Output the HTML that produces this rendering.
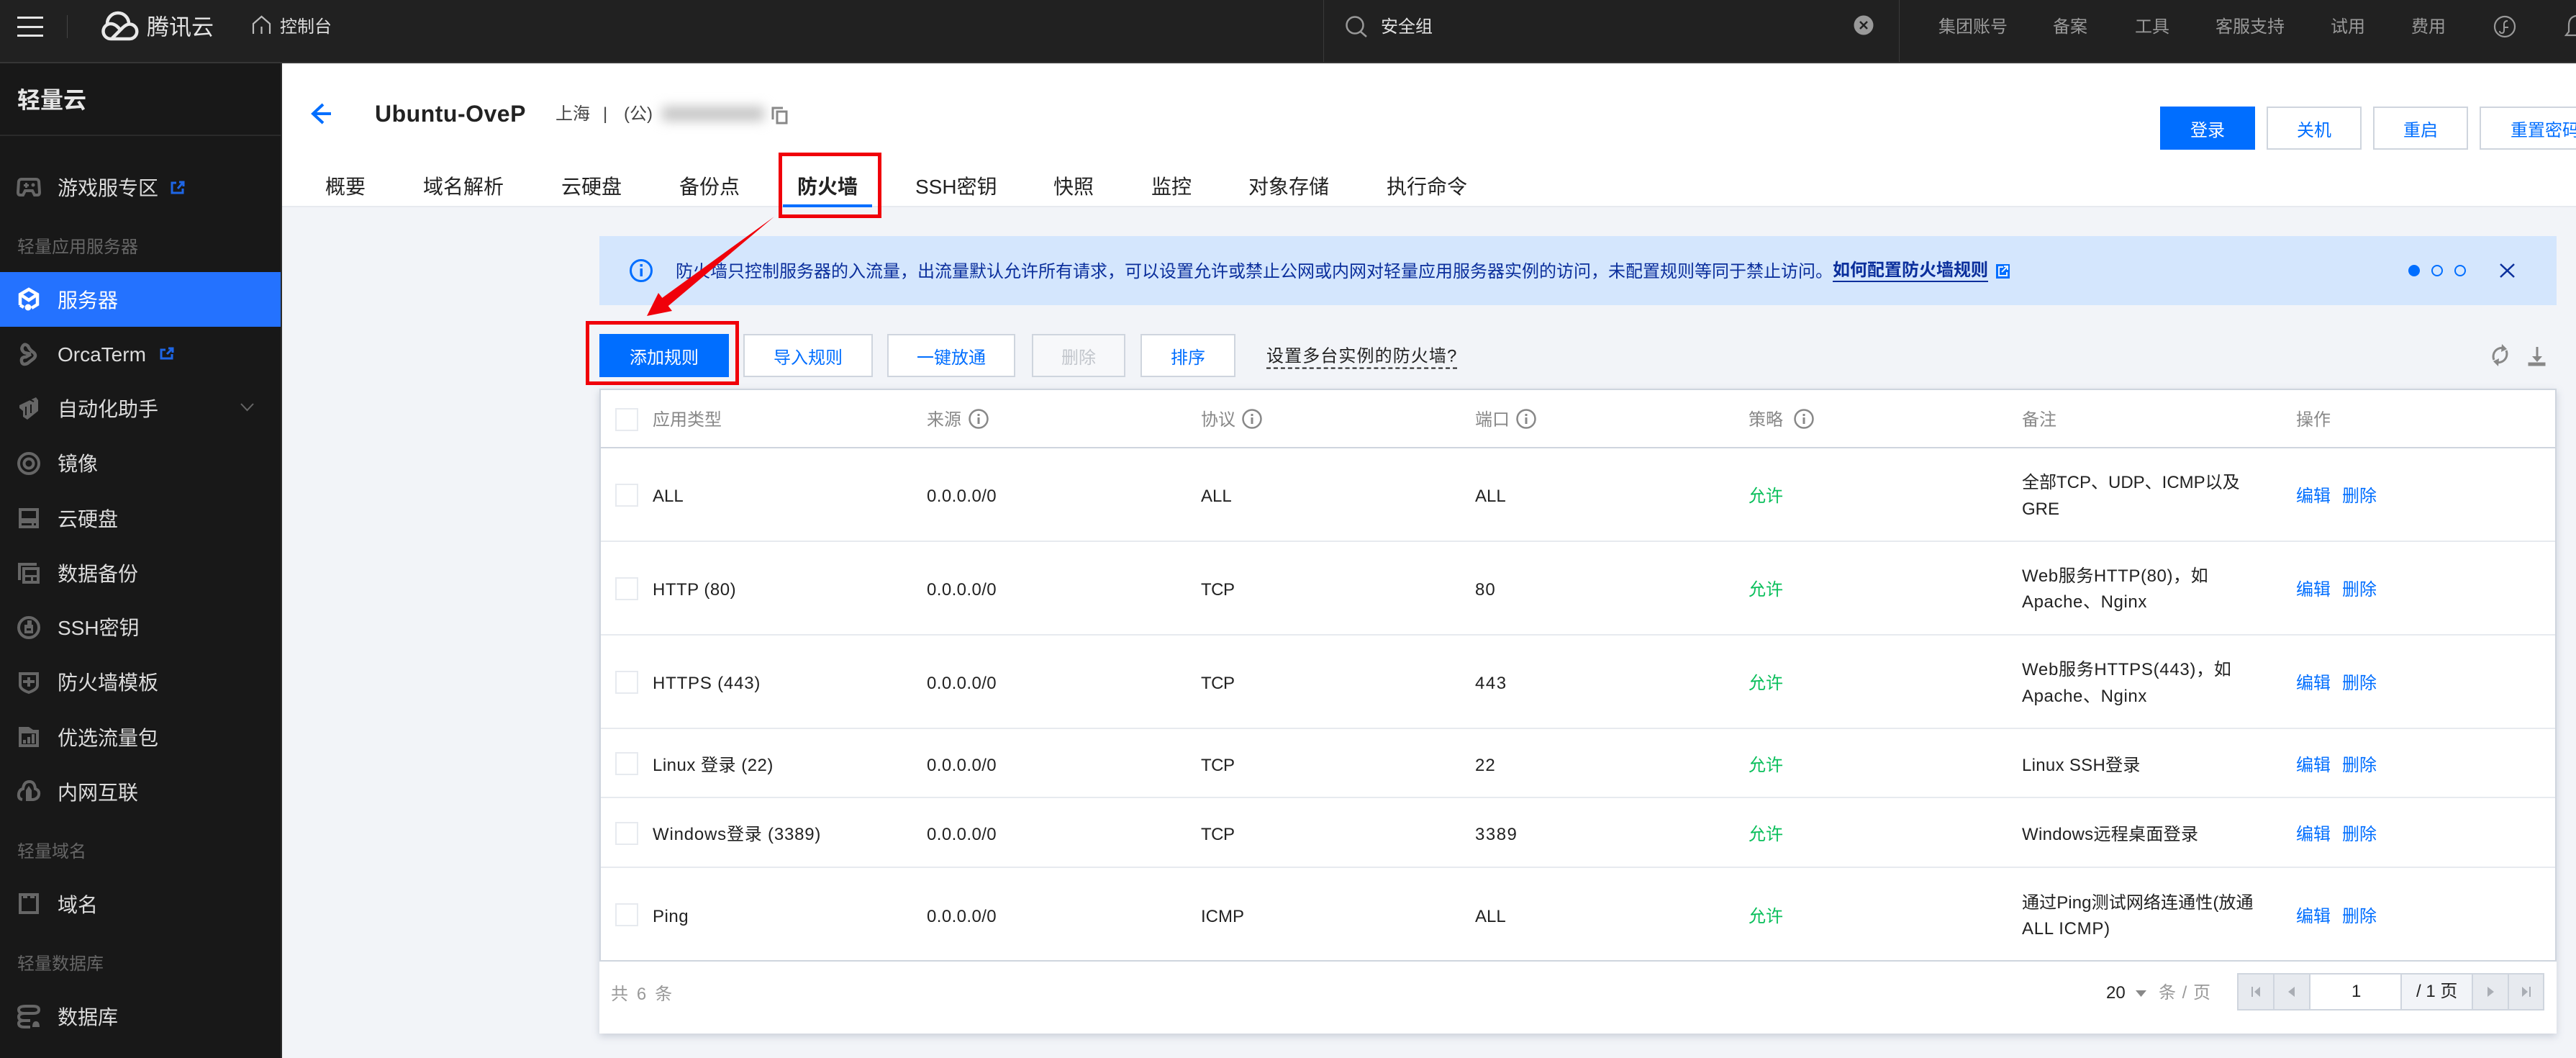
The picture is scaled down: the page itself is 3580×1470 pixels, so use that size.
<!DOCTYPE html>
<html lang="zh-CN"><head><meta charset="utf-8"><title>轻量云 防火墙</title>
<style>
*{box-sizing:border-box}
html,body{margin:0;padding:0;width:3580px;height:1470px;overflow:hidden;background:#f2f4f8;font-family:"Liberation Sans","Noto Sans CJK SC",sans-serif;color:#222}
.a{position:absolute}
.t{position:absolute;white-space:nowrap;line-height:1;transform:translateY(calc(-50% + 2px));font-size:24px}
.s{font-size:28px;left:80px;color:#dcdcdc}
.g{font-size:24px;left:24px;color:#666}
.n{font-size:24px;color:#999}
.tab{font-size:28px;top:258px;color:#222}
.h{color:#888}
.b{position:absolute;height:60px;border:2px solid #cfd5de;background:#fff;color:#006eff;font-size:24px;display:flex;align-items:center;justify-content:center;white-space:nowrap}
.p{background:#006eff;border-color:#006eff;color:#fff}
.l{position:absolute;left:835px;width:2716px;height:2px;background:#e7eaef}
.cb{position:absolute;left:855px;width:32px;height:32px;border:2px solid #e7eaef;background:#fff}
.c{color:#006eff}
.ok{color:#0abf5b;left:2430px}
.ip{letter-spacing:.4px}
.tcp{letter-spacing:-.5px}
</style></head><body>
<div class="a" style="left:0;top:0;width:3580px;height:86px;background:#212121"></div>
<div class="a" style="left:0;top:86px;width:3580px;height:2px;background:#353535"></div>
<div class="a" style="left:0;top:88px;width:390px;height:1382px;background:#181818"></div>
<div class="a" style="left:390px;top:88px;width:2px;height:1382px;background:#2c2c2c"></div>
<div class="a" style="left:0;top:187px;width:390px;height:2px;background:#2a2a2a"></div>
<div class="a" style="left:0;top:378px;width:390px;height:76px;background:#2472ff"></div>
<div class="a" style="left:392px;top:88px;width:3188px;height:198px;background:#fff"></div>
<div class="a" style="left:392px;top:286px;width:3188px;height:2px;background:#e7eaef"></div>
<div class="a" style="left:93px;top:21px;width:1px;height:32px;background:#444"></div>
<div class="a" style="left:1839px;top:0;width:1px;height:86px;background:#3a3a3a"></div>
<div class="a" style="left:2639px;top:0;width:1px;height:86px;background:#3a3a3a"></div>

<span class="t" style="left:204px;top:36px;font-size:31px;color:#e6e6e6">腾讯云</span>
<span class="t" style="left:389px;top:36px;color:#ddd">控制台</span>
<span class="t" style="left:1919px;top:36px;color:#e0e0e0">安全组</span>
<span class="t n" style="left:2694px;top:36px">集团账号</span>
<span class="t n" style="left:2853px;top:36px">备案</span>
<span class="t n" style="left:2967px;top:36px">工具</span>
<span class="t n" style="left:3079px;top:36px">客服支持</span>
<span class="t n" style="left:3239px;top:36px">试用</span>
<span class="t n" style="left:3351px;top:36px">费用</span>

<span class="t" style="left:24px;top:137px;font-size:32px;font-weight:700;color:#e6e6e6">轻量云</span>
<span class="t s" style="top:260px">游戏服专区</span>
<span class="t g" style="top:342px">轻量应用服务器</span>
<span class="t s" style="top:416px;color:#fff">服务器</span>
<span class="t s" style="top:491px">OrcaTerm</span>
<span class="t s" style="top:567px">自动化助手</span>
<span class="t s" style="top:643px">镜像</span>
<span class="t s" style="top:720px">云硬盘</span>
<span class="t s" style="top:796px">数据备份</span>
<span class="t s" style="top:871px">SSH密钥</span>
<span class="t s" style="top:947px">防火墙模板</span>
<span class="t s" style="top:1024px">优选流量包</span>
<span class="t s" style="top:1100px">内网互联</span>
<span class="t g" style="top:1182px">轻量域名</span>
<span class="t s" style="top:1256px">域名</span>
<span class="t g" style="top:1338px">轻量数据库</span>
<span class="t s" style="top:1412px">数据库</span>

<span class="t" style="left:521px;top:156px;font-size:32px;font-weight:700;letter-spacing:.5px;color:#222">Ubuntu-OveP</span>
<span class="t" style="left:772px;top:157px;color:#444">上海</span>
<span class="t" style="left:838px;top:157px;color:#444">|</span>
<span class="t" style="left:867px;top:157px;color:#444">(公)</span>
<div class="a" style="left:920px;top:148px;width:142px;height:20px;background:#c4c4c4;filter:blur(8px)"></div>

<div class="b p" style="left:3002px;top:148px;width:132px">登录</div>
<div class="b" style="left:3150px;top:148px;width:132px">关机</div>
<div class="b" style="left:3298px;top:148px;width:132px">重启</div>
<div class="b" style="left:3446px;top:148px;width:182px;justify-content:flex-start;padding-left:41px">重置密码</div>

<span class="t tab" style="left:452px">概要</span>
<span class="t tab" style="left:588px">域名解析</span>
<span class="t tab" style="left:780px">云硬盘</span>
<span class="t tab" style="left:944px">备份点</span>
<span class="t tab" style="left:1108px;font-weight:700">防火墙</span>
<span class="t tab" style="left:1272px">SSH密钥</span>
<span class="t tab" style="left:1464px">快照</span>
<span class="t tab" style="left:1600px">监控</span>
<span class="t tab" style="left:1735px">对象存储</span>
<span class="t tab" style="left:1927px">执行命令</span>
<div class="a" style="left:1088px;top:284px;width:124px;height:4px;background:#006eff"></div>

<div class="a" style="left:833px;top:328px;width:2720px;height:96px;background:#d4e6fd"></div>
<span class="t" style="left:939px;top:376px;color:#0b2f9c">防火墙只控制服务器的入流量，出流量默认允许所有请求，可以设置允许或禁止公网或内网对轻量应用服务器实例的访问，未配置规则等同于禁止访问。</span>
<span class="t" style="left:2547px;top:376px;color:#0b2f9c;font-weight:700;border-bottom:2px solid #0b2f9c;padding-bottom:2px">如何配置防火墙规则</span>

<div class="b p" style="left:833px;top:464px;width:180px">添加规则</div>
<div class="b" style="left:1033px;top:464px;width:180px">导入规则</div>
<div class="b" style="left:1233px;top:464px;width:178px">一键放通</div>
<div class="b" style="left:1434px;top:464px;width:130px;color:#c2c6cc;background:#f7f8fa">删除</div>
<div class="b" style="left:1585px;top:464px;width:132px">排序</div>
<span class="t" style="left:1760px;top:496px;color:#222;border-bottom:2px dashed #222;padding-bottom:3px;letter-spacing:1.1px">设置多台实例的防火墙?</span>

<div class="a" style="left:833px;top:540px;width:2720px;height:896px;background:#fff;border-top:2px solid #cfd5de;border-left:2px solid #cfd5de;border-right:2px solid #cfd5de;box-shadow:0 4px 10px rgba(130,140,160,.35)"></div>
<div class="a" style="left:833px;top:1336px;width:2720px;height:100px;background:#fff"></div>
<div class="l" style="top:621px;background:#cfd5de"></div>
<div class="l" style="top:751px"></div>
<div class="l" style="top:881px"></div>
<div class="l" style="top:1011px"></div>
<div class="l" style="top:1107px"></div>
<div class="l" style="top:1204px"></div>
<div class="l" style="top:1334px;background:#cfd5de"></div>

<div class="cb" style="top:567px"></div>
<div class="cb" style="top:672px"></div>
<div class="cb" style="top:802px"></div>
<div class="cb" style="top:932px"></div>
<div class="cb" style="top:1045px"></div>
<div class="cb" style="top:1142px"></div>
<div class="cb" style="top:1255px"></div>

<span class="t h" style="left:907px;top:582px">应用类型</span>
<span class="t h" style="left:1288px;top:582px">来源</span>
<span class="t h" style="left:1669px;top:582px">协议</span>
<span class="t h" style="left:2050px;top:582px">端口</span>
<span class="t h" style="left:2430px;top:582px">策略</span>
<span class="t h" style="left:2810px;top:582px">备注</span>
<span class="t h" style="left:3191px;top:582px">操作</span>

<!-- row 1 -->
<span class="t" style="left:907px;top:688px">ALL</span>
<span class="t ip" style="left:1288px;top:688px">0.0.0.0/0</span>
<span class="t" style="left:1669px;top:688px">ALL</span>
<span class="t" style="left:2050px;top:688px">ALL</span>
<span class="t ok" style="top:688px">允许</span>
<span class="t" style="left:2810px;top:669px">全部TCP、UDP、ICMP以及</span>
<span class="t" style="left:2810px;top:706px">GRE</span>
<span class="t c" style="left:3191px;top:688px">编辑</span><span class="t c" style="left:3255px;top:688px">删除</span>
<!-- row 2 -->
<span class="t" style="left:907px;top:818px;letter-spacing:.5px">HTTP (80)</span>
<span class="t ip" style="left:1288px;top:818px">0.0.0.0/0</span>
<span class="t tcp" style="left:1669px;top:818px">TCP</span>
<span class="t" style="left:2050px;top:818px;letter-spacing:1px">80</span>
<span class="t ok" style="top:818px">允许</span>
<span class="t" style="left:2810px;top:799px;letter-spacing:.6px">Web服务HTTP(80)，如</span>
<span class="t" style="left:2810px;top:835px;letter-spacing:.6px">Apache、Nginx</span>
<span class="t c" style="left:3191px;top:818px">编辑</span><span class="t c" style="left:3255px;top:818px">删除</span>
<!-- row 3 -->
<span class="t" style="left:907px;top:948px;letter-spacing:.8px">HTTPS (443)</span>
<span class="t ip" style="left:1288px;top:948px">0.0.0.0/0</span>
<span class="t tcp" style="left:1669px;top:948px">TCP</span>
<span class="t" style="left:2050px;top:948px;letter-spacing:1.5px">443</span>
<span class="t ok" style="top:948px">允许</span>
<span class="t" style="left:2810px;top:929px;letter-spacing:.7px">Web服务HTTPS(443)，如</span>
<span class="t" style="left:2810px;top:966px;letter-spacing:.6px">Apache、Nginx</span>
<span class="t c" style="left:3191px;top:948px">编辑</span><span class="t c" style="left:3255px;top:948px">删除</span>
<!-- row 4 -->
<span class="t" style="left:907px;top:1062px;letter-spacing:.5px">Linux 登录 (22)</span>
<span class="t ip" style="left:1288px;top:1062px">0.0.0.0/0</span>
<span class="t tcp" style="left:1669px;top:1062px">TCP</span>
<span class="t" style="left:2050px;top:1062px;letter-spacing:1px">22</span>
<span class="t ok" style="top:1062px">允许</span>
<span class="t" style="left:2810px;top:1062px;letter-spacing:.3px">Linux SSH登录</span>
<span class="t c" style="left:3191px;top:1062px">编辑</span><span class="t c" style="left:3255px;top:1062px">删除</span>
<!-- row 5 -->
<span class="t" style="left:907px;top:1158px;letter-spacing:.8px">Windows登录 (3389)</span>
<span class="t ip" style="left:1288px;top:1158px">0.0.0.0/0</span>
<span class="t tcp" style="left:1669px;top:1158px">TCP</span>
<span class="t" style="left:2050px;top:1158px;letter-spacing:1.5px">3389</span>
<span class="t ok" style="top:1158px">允许</span>
<span class="t" style="left:2810px;top:1158px;letter-spacing:.3px">Windows远程桌面登录</span>
<span class="t c" style="left:3191px;top:1158px">编辑</span><span class="t c" style="left:3255px;top:1158px">删除</span>
<!-- row 6 -->
<span class="t" style="left:907px;top:1272px;letter-spacing:.5px">Ping</span>
<span class="t ip" style="left:1288px;top:1272px">0.0.0.0/0</span>
<span class="t" style="left:1669px;top:1272px">ICMP</span>
<span class="t" style="left:2050px;top:1272px">ALL</span>
<span class="t ok" style="top:1272px">允许</span>
<span class="t" style="left:2810px;top:1253px;letter-spacing:.1px">通过Ping测试网络连通性(放通</span>
<span class="t" style="left:2810px;top:1289px;letter-spacing:.7px">ALL ICMP)</span>
<span class="t c" style="left:3191px;top:1272px">编辑</span><span class="t c" style="left:3255px;top:1272px">删除</span>

<span class="t" style="left:849px;top:1380px;color:#999;letter-spacing:2.6px">共 6 条</span>
<span class="t" style="left:2927px;top:1378px">20</span>
<span class="t" style="left:3000px;top:1378px;color:#999;letter-spacing:1px">条 / 页</span>

<div class="a" style="left:3109px;top:1352px;width:427px;height:52px;background:#cfd5de"></div>
<div class="a" style="left:3111px;top:1354px;width:48px;height:48px;background:#e7eaef"></div>
<div class="a" style="left:3161px;top:1354px;width:48px;height:48px;background:#e7eaef"></div>
<div class="a" style="left:3211px;top:1354px;width:125px;height:48px;background:#fff"></div>
<div class="a" style="left:3338px;top:1354px;width:97px;height:48px;background:#f2f4f8"></div>
<div class="a" style="left:3437px;top:1354px;width:48px;height:48px;background:#e7eaef"></div>
<div class="a" style="left:3487px;top:1354px;width:47px;height:48px;background:#e7eaef"></div>
<span class="t" style="left:3268px;top:1376px">1</span>
<span class="t" style="left:3358px;top:1376px">/ 1 页</span>

<svg class="a" style="left:0;top:0" width="3580" height="1470" viewBox="0 0 3580 1470" xmlns="http://www.w3.org/2000/svg">
<!-- top bar -->
<g fill="#e6e6e6"><rect x="24" y="23" width="36" height="3"/><rect x="24" y="36" width="36" height="3"/><rect x="24" y="48" width="36" height="3"/></g>
<g fill="none" stroke="#e8e8e8" stroke-width="4.5">
<path d="M156 53 L171 38 Q176 33.5 180 33.5 A10 10 0 0 1 180 54 H154 A10.5 10.5 0 0 1 154 33 Q160 33 166 40"/>
<path d="M149 33 A15 15 0 0 1 179 33"/>
</g>
<path d="M352 47 V33 L363.5 23 L375 33 V47 M363.5 37 V47" fill="none" stroke="#bbb" stroke-width="2.2"/>
<circle cx="1883" cy="35" r="11.5" fill="none" stroke="#999" stroke-width="2.5"/><path d="M1891 44 L1899 51" stroke="#999" stroke-width="2.5"/>
<circle cx="2590" cy="35" r="13.5" fill="#999"/><path d="M2585 30 L2595 40 M2595 30 L2585 40" stroke="#212121" stroke-width="2.5"/>
<circle cx="3481" cy="37" r="14" fill="none" stroke="#999" stroke-width="2.2"/>
<path d="M3485 29 Q3480 29 3480 34 V42 Q3480 46 3477 46 Q3474 46 3474 43 M3480 38 H3486" fill="none" stroke="#999" stroke-width="2"/>
<path d="M3580 22 Q3570 24 3570 35 V44 L3566 49 H3580" fill="none" stroke="#999" stroke-width="2.2"/>

<!-- sidebar icons -->
<g fill="none" stroke="#666" stroke-width="4">
<path d="M30 249 H50 Q53 249 54 252 L55 267 Q55 271 52 271 H48 L45 265 H35 L32 271 H28 Q25 271 25 267 L26 252 Q27 249 30 249Z"/>
<circle cx="40" cy="644" r="14"/><circle cx="40" cy="644" r="6.5"/>
<rect x="28" y="708" width="24" height="24"/>
<path d="M27 806 V784 H51"/><rect x="33" y="790" width="20" height="19"/>
<circle cx="40" cy="872" r="14"/>
<path d="M28 936 H52 V952 Q52 958 40 962 Q28 958 28 952Z"/>
<path d="M31 1111 Q25 1110 26 1103 Q27 1097 32 1096 Q33 1086 41 1086 Q48 1086 49 1096 Q55 1098 54 1104 Q53 1110 46 1111 H40"/>
<rect x="28" y="1243" width="24" height="25"/>
<path d="M36 1398 H46 Q54 1398 54 1403 Q54 1408 46 1408 H34 Q26 1408 26 1413 Q26 1418 34 1418 H42 M36 1398 Q26 1398 26 1403 Q26 1408 34 1408 M34 1418 Q26 1418 26 1422 Q26 1427 34 1427 H42"/>
<path d="M31 482 Q34 476 39 481 Q41 486 47 490 Q51 494 47 498 L38 505 Q31 508 30 502 Q29 496 36 496 L43 492 M31 482 Q29 486 34 490 L43 492" stroke-width="4.5"/>
</g>
<path d="M45 1427 Q45 1419 50 1419 Q55 1419 55 1427Z" fill="#666"/>
<g fill="#666">
<rect x="33" y="256" width="7" height="3"/><rect x="35" y="254" width="3" height="7"/><circle cx="46" cy="257" r="2.5"/>
<path d="M27 563 L50 552 L53 556 V571 L38 583 L32 579 V571 L27 567Z"/>
<rect x="28" y="720" width="24" height="3"/><rect x="28" y="721" width="24" height="6"/><rect x="44" y="727" width="3" height="4"/>
<rect x="35" y="799" width="16" height="3"/><rect x="43" y="802" width="3" height="5"/>
<path d="M38 862 H44 V868 H46 V880 H34 V868 H38Z"/>
<rect x="32" y="945" width="16" height="4"/><rect x="38" y="941" width="4" height="13"/>
<path d="M26 1010 H40 L46 1014 H54 V1038 H26Z"/>
<path d="M36 1098 L40 1092 L44 1098 V1113 H36Z"/>
<rect x="32" y="1245" width="6" height="3"/><rect x="42" y="1245" width="6" height="3"/>
</g>
<rect x="30" y="1019" width="20" height="15" fill="#181818"/>
<g fill="#666"><rect x="32" y="1028" width="4" height="5"/><rect x="38" y="1024" width="4" height="9"/><rect x="44" y="1020" width="4" height="13"/></g>
<path d="M37 553 L47 558 M36 565 V577 M43 562 V574" stroke="#181818" stroke-width="2" fill="none"/>
<rect x="37" y="873" width="6" height="3" fill="#181818"/>
<path d="M335 561 L343.5 570 L352 561" fill="none" stroke="#666" stroke-width="2"/>
<g fill="none" stroke="#fff" stroke-width="4.5">
<path d="M28 424 V409 L40 402 L52 409 V423 L44 428 M28 409 L40 417 L52 409 M28 424 L33 427"/>
</g>
<circle cx="39" cy="427" r="4.5" fill="#fff"/>
<g fill="none" stroke="#1e66e6" stroke-width="3">
<path d="M245 254 H239 V268 H254 V262 M247 262 L254 254 M249 253 H255 V259"/>
<path d="M230 486 H224 V498 H239 V492 M232 492 L239 485 M234 484 H240 V490"/>
</g>

<!-- header -->
<path d="M460 158 H436 M449 145 L435 158 L449 171" fill="none" stroke="#006eff" stroke-width="4"/>
<g fill="none" stroke="#888" stroke-width="3"><path d="M1074 166 V150 H1088"/><rect x="1080" y="155" width="13" height="16"/></g>

<!-- banner -->
<circle cx="891" cy="376" r="14.5" fill="none" stroke="#006eff" stroke-width="3"/>
<rect x="889.5" y="373" width="3.5" height="11" fill="#006eff"/><rect x="889.5" y="367" width="3.5" height="3.5" fill="#006eff"/>
<rect x="2774" y="367" width="19" height="20" fill="#006eff"/>
<path d="M2784 371 H2778 V383 H2789 V378 M2782 378 L2789 371 M2785 370 H2790 V375" fill="none" stroke="#eaf3ff" stroke-width="2"/>
<circle cx="3355" cy="376" r="8" fill="#006eff"/>
<circle cx="3387" cy="376" r="7" fill="none" stroke="#006eff" stroke-width="2"/>
<circle cx="3419" cy="376" r="7" fill="none" stroke="#006eff" stroke-width="2"/>
<path d="M3475 367 L3494 385 M3494 367 L3475 385" stroke="#0b2f9c" stroke-width="2.5"/>

<!-- toolbar icons -->
<g fill="none" stroke="#888" stroke-width="3">
<path d="M3481 484 A12 12 0 0 0 3466 500"/><path d="M3468 503 A12 12 0 0 0 3483 487"/>
<path d="M3526 482 V498"/><rect x="3515" y="505" width="21" height="2"/>
</g>
<g fill="#888">
<path d="M3477 478 L3484 485 L3476 489Z"/><path d="M3472 509 L3465 502 L3473 498Z"/>
<path d="M3519 495 H3533 L3526 503Z"/>
</g>

<!-- table info icons -->
<g fill="none" stroke="#888" stroke-width="2.5">
<circle cx="1360" cy="582" r="12.5"/><circle cx="1740" cy="582" r="12.5"/><circle cx="2121" cy="582" r="12.5"/><circle cx="2507" cy="582" r="12.5"/>
</g>
<g fill="#888">
<rect x="1358.5" y="580" width="3" height="9"/><rect x="1358.5" y="575" width="3" height="3"/>
<rect x="1738.5" y="580" width="3" height="9"/><rect x="1738.5" y="575" width="3" height="3"/>
<rect x="2119.5" y="580" width="3" height="9"/><rect x="2119.5" y="575" width="3" height="3"/>
<rect x="2505.5" y="580" width="3" height="9"/><rect x="2505.5" y="575" width="3" height="3"/>
</g>

<!-- pagination icons -->
<path d="M2968 1376 H2983 L2975.5 1385Z" fill="#888"/>
<g fill="#a9adb4">
<rect x="3129" y="1371" width="2" height="14"/><path d="M3141 1371 V1385 L3133 1378Z"/>
<path d="M3189 1371 V1385 L3180 1378Z"/>
<path d="M3457 1371 V1385 L3466 1378Z"/>
<path d="M3505 1371 V1385 L3513 1378Z"/><rect x="3515" y="1371" width="2" height="14"/>
</g>

<!-- annotations -->
<g fill="none" stroke="#f0000a" stroke-width="5">
<rect x="1084.5" y="214.5" width="138" height="86"/>
<rect x="816.5" y="448.5" width="208" height="84"/>
</g>
<polygon points="899,439 915,407 920.3,413.9 1076,301 928.7,425.1 934,432" fill="#f0000a"/>
</svg>
</body></html>
